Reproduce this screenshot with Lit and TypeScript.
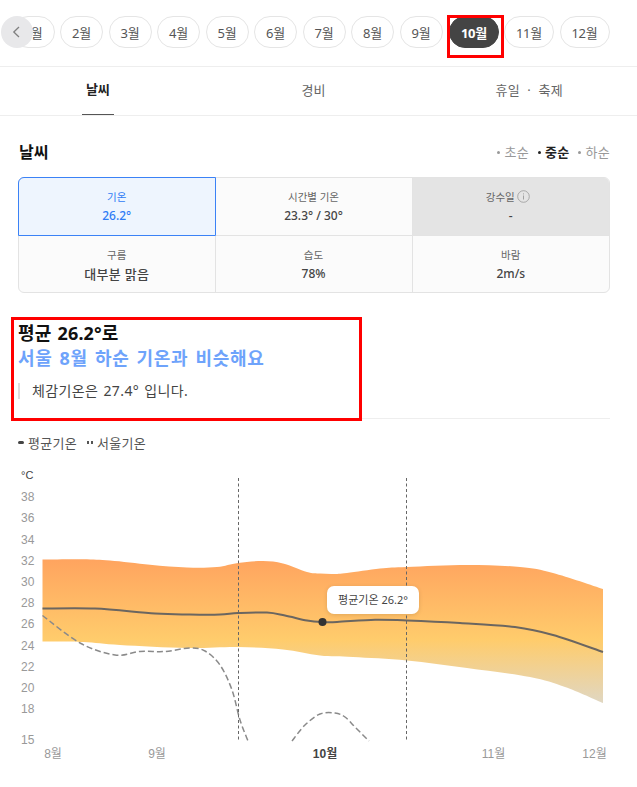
import { LitElement, html, css, svg } from "lit";
import { customElement } from "lit/decorators.js";

const months = ["1월","2월","3월","4월","5월","6월","7월","8월","9월","10월","11월","12월"];
const cells = [
  { l: "기온", v: "26.2°", c: "sel" },
  { l: "시간별 기온", v: "23.3° / 30°", c: "" },
  { l: "강수일", v: "-", c: "gray", info: true },
  { l: "구름", v: "대부분 맑음", c: "big" },
  { l: "습도", v: "78%", c: "" },
  { l: "바람", v: "2m/s", c: "" },
];
const yTicks: [string, number][] = [["38",496],["36",517],["34",539],["32",560],["30",581],["28",602.5],["26",623.5],["24",645],["22",666],["20",687],["18",708.5],["15",739.5]];
const xTicks: [string, number, boolean][] = [["8월",53,false],["9월",157,false],["10월",325,true],["11월",493.5,false],["12월",594.5,false]];

const top: number[][] = [[42.5,559.5],[83,559.2],[110,560.5],[150,564.7],[187,567.5],[217,567],[238,563],[263,561],[283,563.5],[307,572],[320,573.5],[333,574],[347,573],[380,568.5],[407,567],[467,565],[520,567],[553,573],[603,589]];
const bottom: number[][] = [[603,703],[565,687],[530,677],[467,668],[407,660.5],[353,657],[320,655.5],[283,649.5],[238,647],[187,648],[120,645],[83,642],[42.5,641.5]];
const avg: number[][] = [[42.5,608.5],[95,608.5],[155,613.5],[190,614.5],[220,614.5],[238,613],[267,612.5],[285,615.5],[307,620.5],[322,622],[337,622],[375,619.7],[407,620.5],[460,623],[515,627],[553,635],[603,652]];
const seoulA: number[][] = [[42.5,615.5],[80,643],[115,655],[140,651.5],[165,651.5],[190,648],[205,651],[220,665],[232,690],[240,720],[248,741]];
const seoulB: number[][] = [[292,741],[305,725],[320,714],[335,713],[345,717],[355,727],[369,741]];

function smooth(p: number[][], move = true): string {
  let d = move ? `M${p[0][0]} ${p[0][1]}` : `L${p[0][0]} ${p[0][1]}`;
  for (let i = 0; i < p.length - 1; i++) {
    const a = p[Math.max(i - 1, 0)], b = p[i], c = p[i + 1], e = p[Math.min(i + 2, p.length - 1)];
    const c1 = [b[0] + (c[0] - a[0]) / 6, b[1] + (c[1] - a[1]) / 6];
    const c2 = [c[0] - (e[0] - b[0]) / 6, c[1] - (e[1] - b[1]) / 6];
    d += `C${c1[0].toFixed(1)} ${c1[1].toFixed(1)} ${c2[0].toFixed(1)} ${c2[1].toFixed(1)} ${c[0]} ${c[1]}`;
  }
  return d;
}

@customElement("app-root")
export class AppRoot extends LitElement {
  static styles = css`
    :host { display: block; width: 637px; height: 787px; overflow: hidden; background: #fff; color: #333;
      font-family: "Noto Sans", "Noto Sans CJK KR", sans-serif; }
    *, *::after, *::before { box-sizing: border-box; }
    .months { position: relative; display: flex; gap: 5.5px; padding: 16px 0 18px 11.5px; border-bottom: 1px solid #eee; height: 67px; }
    .pill { flex: none; position: relative; width: 43px; height: 32px; border: 1px solid #e5e5e5; border-radius: 16px; background: #fff;
      display: flex; align-items: center; justify-content: center; font-size: 13px; color: #555; letter-spacing: -0.2px; }
    .pill.wide { width: 50px; }
    .pill.on { background: #444; border-color: #444; color: #fff; font-weight: 700; margin: 0 -0.5px 0 1px; }
    .pill.on::after { content: ""; position: absolute; left: -3px; top: -2px; width: 57px; height: 43px; border: 3px solid #f00; }
    .back { position: absolute; left: 1px; top: 16px; width: 32px; height: 32px; border-radius: 50%; background: #e8e8ea;
      display: flex; align-items: center; justify-content: center; }
    .tabs { display: grid; grid-template-columns: repeat(3, 215.7px); margin-left: -10px; height: 49px; }
    .tabline { border-bottom: 1px solid #eee; height: 49px; overflow: hidden; }
    .tab { display: flex; justify-content: center; }
    .tab span { display: flex; align-items: center; height: 48px; padding: 0 4px 4px; font-size: 13px; color: #666; white-space: pre; }
    .tab.far span { letter-spacing: 0.3px; }
    .tab.on span { color: #222; font-weight: 700; border-bottom: 1px solid #555; }
    .head { display: flex; justify-content: space-between; align-items: center; padding: 0 27px 0 19px; margin-top: 23px; height: 24px; }
    h2 { margin: 0; font-size: 16px; font-weight: 700; color: #111; }
    .terms { display: flex; gap: 9px; font-size: 13px; letter-spacing: 0.3px; color: #999; }
    .terms span::before { content: ""; display: inline-block; width: 3px; height: 3px; border-radius: 50%; background: currentColor; margin-right: 4px; vertical-align: 3px; }
    .terms .on { color: #222; font-weight: 700; }
    .table { display: grid; grid-template-columns: 196.5px 197px 196.5px; grid-template-rows: 58px 56px; margin: 14px 0 0 18px; width: 592px;
      border: 1px solid #e3e3e3; border-radius: 6px; background: #fbfbfb; }
    .cell { display: flex; flex-direction: column; align-items: center; justify-content: center; gap: 2px; border-right: 1px solid #e3e3e3; border-bottom: 1px solid #e3e3e3; }
    .cell:nth-child(3n) { border-right: 0; }
    .cell:nth-child(n+4) { border-bottom: 0; padding-top: 1px; }
    .cell:nth-child(3) { border-top-right-radius: 5px; }
    .cell:nth-child(4) { border-bottom-left-radius: 5px; }
    .cell:nth-child(6) { border-bottom-right-radius: 5px; }
    .cell .l { font-size: 10.5px; color: #666; line-height: 16px; display: flex; align-items: center; gap: 2px; }
    .cell .v { font-size: 12px; font-weight: 500; color: #444; line-height: 18px; }
    .cell.big .v { font-size: 13px; font-weight: 500; letter-spacing: 0.3px; }
    .cell.sel { background: #eef5fe; border: 1px solid #3b82f6; border-top-left-radius: 6px; margin: -1px 0 0 -1px; }
    .cell.sel .l, .cell.sel .v { color: #2f7bf5; }
    .cell.gray { background: #e4e4e4; }
    .cell.gray .l { margin-right: 6px; }
    .summary { position: relative; margin: 28px 27px 0 18px; padding-bottom: 17px; border-bottom: 1px solid #eee; height: 98px; }
    .summary::after { content: ""; position: absolute; left: -7px; top: -4px; width: 351px; height: 104px; border: 3px solid #f00; }
    .s1 { font-size: 18px; font-weight: 700; color: #111; line-height: 25px; letter-spacing: 0.1px; word-spacing: 1.5px; }
    .s2 { font-size: 18px; font-weight: 700; color: #6ea3fb; line-height: 25px; letter-spacing: 0.7px; word-spacing: 1.7px; }
    .s3 { margin-top: 12px; padding-left: 12px; border-left: 2px solid #ddd; font-size: 14px; line-height: 16px; color: #444; letter-spacing: 0.4px; word-spacing: 1px; }
    .legend { display: flex; gap: 10px; align-items: center; margin: 14px 0 0 18px; height: 18px; font-size: 13px; color: #555; letter-spacing: 0.3px; }
    .legend span { display: flex; align-items: center; gap: 4px; }
    .solid { width: 6px; height: 3px; border-radius: 2px; background: #444; }
    .dots { width: 6px; height: 3px; background: repeating-linear-gradient(90deg, #555 0 2px, transparent 2px 4px); }
    .chart { display: block; margin-top: 9px; }
    .chart text { font-family: "Liberation Sans", "Noto Sans CJK KR", sans-serif; }
    .chart .tip { font-family: "Noto Sans", "Noto Sans CJK KR", sans-serif; }
  `;

  render() {
    return html`
      <div class="months">
        ${months.map((m, i) => html`<div class="pill ${i >= 9 ? "wide" : ""} ${i === 9 ? "on" : ""}">${m}</div>`)}
        <div class="back"><svg width="10" height="14" viewBox="0 0 10 14"><path d="M7 2 1.8 7 7 12" fill="none" stroke="#808080" stroke-width="1.3"/></svg></div>
      </div>
      <div class="tabline"><div class="tabs">
        <div class="tab on"><span>날씨</span></div>
        <div class="tab"><span>경비</span></div>
        <div class="tab far"><span>휴일  ·  축제</span></div>
      </div></div>
      <div class="head"><h2>날씨</h2>
        <div class="terms"><span>초순</span><span class="on">중순</span><span>하순</span></div>
      </div>
      <div class="table">
        ${cells.map(c => html`<div class="cell ${c.c}">
          <div class="l">${c.l}${c.info ? html`<svg width="13" height="13" viewBox="0 0 13 13"><circle cx="6.5" cy="6.5" r="5.8" fill="none" stroke="#999" stroke-width=".8"/><path d="M6.5 5.5v4M6.5 3.4v1" stroke="#999" stroke-width=".9"/></svg>` : ""}</div>
          <div class="v">${c.v}</div>
        </div>`)}
      </div>
      <div class="summary">
        <div class="s1">평균 26.2°로</div>
        <div class="s2">서울 8월 하순 기온과 비슷해요</div>
        <div class="s3">체감기온은 27.4° 입니다.</div>
      </div>
      <div class="legend"><span><i class="solid"></i>평균기온</span><span><i class="dots"></i>서울기온</span></div>
      ${this.chart()}
    `;
  }

  chart() {
    const H = 460;
    return html`<svg class="chart" width="637" height="327" viewBox="0 ${H} 637 327">
      <defs><linearGradient id="band" gradientUnits="userSpaceOnUse" x1="0" y1="560" x2="0" y2="703">
        <stop offset="0" stop-color="#ffa45f"/><stop offset="0.56" stop-color="#ffcc6c"/><stop offset="1" stop-color="#e0d7c2"/>
      </linearGradient></defs>
      ${svg`
        <text x="21" y="479" font-size="11" fill="#444">°C</text>
        ${yTicks.map(([t, y]) => svg`<text x="21" y=${y + 4.5} font-size="12" fill="#999">${t}</text>`)}
        <path d="${smooth(top)}${smooth(bottom, false)}Z" fill="url(#band)"/>
        <path d=${smooth(avg)} fill="none" stroke="#6b6660" stroke-width="2"/>
        <path d=${smooth(seoulA)} fill="none" stroke="#8a8a8a" stroke-width="1.5" stroke-dasharray="6 3"/>
        <path d=${smooth(seoulB)} fill="none" stroke="#8a8a8a" stroke-width="1.5" stroke-dasharray="6 3"/>
        <path d="M238.5 478V741M406.5 478V741" stroke="#666" stroke-dasharray="3 2.5"/>
        <circle cx="322.5" cy="622" r="4" fill="#333"/>
        <rect x="327" y="586" width="92" height="28" rx="7" fill="#fff" style="filter:drop-shadow(0 1px 2px rgba(0,0,0,.12))"/>
        <text class="tip" x="373" y="604" text-anchor="middle" font-size="11" fill="#444">평균기온 26.2°</text>
        ${xTicks.map(([t, x, b]) => svg`<text x=${x} y="758" text-anchor="middle" font-size="12" font-weight=${b ? 700 : 400} fill=${b ? "#444" : "#999"}>${t}</text>`)}
      `}
    </svg>`;
  }
}
